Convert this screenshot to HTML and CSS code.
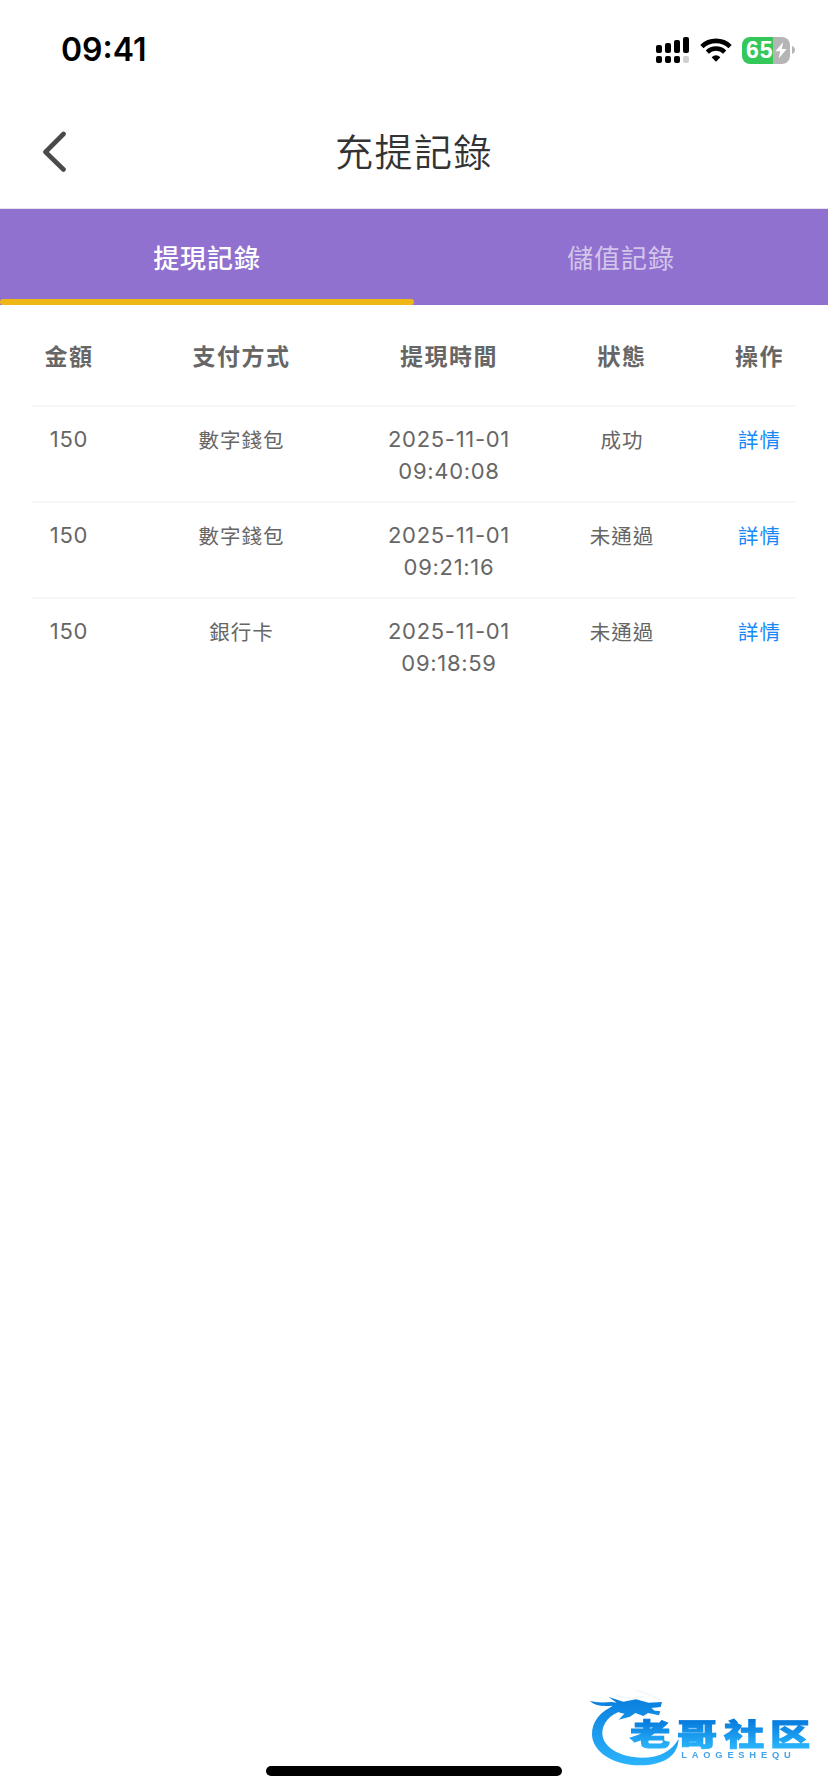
FILE: index.html
```html
<!DOCTYPE html>
<html lang="zh-Hant">

<head>
    <meta charset="UTF-8">
    <meta name="viewport" content="width=device-width, initial-scale=1.0">
    <title>充提記錄</title>
    <link rel="stylesheet" href="styles.css">
</head>

<body>
    <div class="status-bar">
        <span class="time">09:41</span>
        <div class="status-icons">
            <svg class="signal" width="33" height="26" viewBox="0 0 33 26">
                <rect x="0" y="8" width="6" height="8" rx="2"/>
                <rect x="9" y="6" width="6" height="10" rx="2"/>
                <rect x="18" y="3" width="6" height="13" rx="2"/>
                <rect x="27" y="0" width="6" height="16" rx="2"/>
                <rect x="0" y="19" width="6" height="7" rx="2"/>
                <rect x="9" y="19" width="6" height="7" rx="2"/>
                <rect x="18" y="19" width="6" height="7" rx="2"/>
                <rect x="27" y="19" width="6" height="7" rx="2" fill="#d0d0d0"/>
            </svg>
            <svg class="wifi" width="32" height="24" viewBox="0 0 32 24">
                <path d="M1.9 8.6A20.2 20.2 0 0 1 30.1 8.6" fill="none" stroke="#000" stroke-width="4.6"/>
                <path d="M7.3 14.1A12.4 12.4 0 0 1 24.7 14.1" fill="none" stroke="#000" stroke-width="4.4"/>
                <path d="M11.6 19.2Q16 15.4 20.4 19.2L16 23.8Z"/>
            </svg>
            <div class="battery">
                <span>65</span>
                <svg width="12" height="17" viewBox="0 0 12 17">
                    <path d="M8.2 0L0.4 9.3H5.2L3.7 16.6L11.6 7.1H6.8Z" fill="#fff"/>
                </svg>
            </div>
            <svg width="3" height="8" viewBox="0 0 3 8">
                <path d="M0 0Q3 1.2 3 4T0 8Z" fill="#b5b5b5"/>
            </svg>
        </div>
    </div>

    <div class="header">
        <svg class="back" width="24" height="42" viewBox="0 0 24 42">
            <path d="M20.5 3L2.5 21L20.5 38.5" fill="none" stroke="#4a4a4a" stroke-width="4.6" stroke-linecap="round" stroke-linejoin="round"/>
        </svg>
        <h1>充提記錄</h1>
    </div>

    <div class="tabs">
        <div class="tab active">提現記錄</div>
        <div class="tab">儲值記錄</div>
    </div>

    <div class="records">
        <div class="row head">
            <span>金額</span>
            <span>支付方式</span>
            <span>提現時間</span>
            <span>狀態</span>
            <span>操作</span>
        </div>
        <div class="row">
            <span class="num">150</span>
            <span>數字錢包</span>
            <span class="num">2025-11-01 09:40:08</span>
            <span>成功</span>
            <a class="detail">詳情</a>
        </div>
        <div class="row">
            <span class="num">150</span>
            <span>數字錢包</span>
            <span class="num">2025-11-01 09:21:16</span>
            <span>未通過</span>
            <a class="detail">詳情</a>
        </div>
        <div class="row">
            <span class="num">150</span>
            <span>銀行卡</span>
            <span class="num">2025-11-01 09:18:59</span>
            <span>未通過</span>
            <a class="detail">詳情</a>
        </div>
    </div>

    <svg class="logo" width="258" height="112" viewBox="0 0 774 336">
        <defs>
            <linearGradient id="blue" gradientUnits="userSpaceOnUse" x1="0" y1="60" x2="0" y2="250">
                <stop offset="0" stop-color="#0a80df"/>
                <stop offset="1" stop-color="#2bb2fb"/>
            </linearGradient>
            <!-- measured from the text baseline -->
            <linearGradient id="word" gradientUnits="userSpaceOnUse" x1="0" y1="-76" x2="0" y2="8">
                <stop offset="0" stop-color="#0578dc"/>
                <stop offset="1" stop-color="#29b3fb"/>
            </linearGradient>
        </defs>
        <!-- dragon body -->
        <path d="M138 76C90 92 65 126 66 164C68 216 130 256 210 256C275 255 324 232 326 176C306 212 270 233 216 233C150 232 99 202 97 162C96 130 118 104 160 90Z" fill="url(#blue)"/>
        <!-- dragon head, horns and whiskers -->
        <path d="M60 63Q84 70 126 66L140 68L116 51L160 65L198 58L236 68L276 66L272 81L244 84L254 92L271 94L267 106L234 99L220 108L196 99L180 110L146 119L163 101L140 95L110 91L128 77Q76 82 60 63Z" fill="url(#blue)"/>
        <path d="M140 46Q180 62 222 50M198 32Q244 42 272 62" fill="none" stroke="#edf6fd" stroke-width="4"/>
        <g class="logo-name">
            <text transform="translate(180 194) scale(1.34 1)">老</text>
            <text transform="translate(321 194) scale(1.34 1)">哥</text>
            <text transform="translate(462 194) scale(1.34 1)">社</text>
            <text transform="translate(600 194) scale(1.34 1)">区</text>
        </g>
        <text class="logo-sub" x="334" y="235" textLength="328">LAOGESHEQU</text>
    </svg>
    <div class="home-bar"></div>
</body>

</html>
```

FILE: styles.css
```css
body {
    margin: 0;
    min-height: 1792px;
    background: #fff;
    color: #666;
    font-family: "Noto Sans CJK TC", sans-serif;
}

.status-bar {
    display: flex;
    justify-content: space-between;
    height: 96px;
    padding: 0 33px 0 61px;
    box-sizing: border-box;
}

.time {
    margin-top: 30px;
    font: 600 32px/40px Inter, sans-serif;
    color: #000;
}

.status-icons {
    display: flex;
    align-items: center;
    height: 26px;
    margin-top: 37px;
}

.wifi {
    margin: 0 10px 0 11px;
}

.battery {
    display: flex;
    align-items: center;
    width: 48px;
    height: 27px;
    margin-right: 2px;
    padding-left: 4px;
    box-sizing: border-box;
    border-radius: 8px;
    background: linear-gradient(to right, #34c759 31px, #b5b5b5 31px);
    color: #fff;
}

.battery span {
    width: 29px;
    font: 700 23px/27px "Liberation Sans", sans-serif;
    letter-spacing: 1px;
}

.header {
    display: grid;
    grid-template-columns: 44px 1fr 44px;
    align-items: center;
    height: 113px;
    padding: 0 43px;
    box-sizing: border-box;
    border-bottom: 1px solid #e5e2ea;
}

h1 {
    margin: -6px 0 0;
    text-align: center;
    font-size: 38px;
    font-weight: 350;
    letter-spacing: 1.5px;
    color: #333;
}

.tabs {
    display: flex;
    height: 96px;
    background: #9171cf;
}

.tab {
    flex: 1;
    box-sizing: border-box;
    text-align: center;
    font-size: 26px;
    line-height: 96px;
    letter-spacing: 0.9px;
    color: #d3c6eb;
}

.tab.active {
    display: flex;
    flex-direction: column;
    font-weight: 500;
    color: #fff;
}

.tab.active::after {
    content: "";
    height: 6px;
    margin-top: -6px;
    border-radius: 4px;
    background: #efb715;
}

.records {
    padding: 0 32px;
}

.row {
    display: grid;
    grid-template-columns: 74px 271px 144px 202px 73px;
    height: 96px;
    padding-top: 16px;
    box-sizing: border-box;
    border-top: 2px solid #f7f7f7;
    text-align: center;
    font-size: 20.5px;
    line-height: 32px;
    letter-spacing: 1px;
}

.row.head {
    height: 100px;
    padding-top: 32px;
    border-top: none;
    font-size: 23px;
    font-weight: 700;
    line-height: 36px;
    letter-spacing: 1.5px;
}

.num {
    font-family: Inter, sans-serif;
    font-size: 22px;
    letter-spacing: 0.7px;
}

.detail {
    color: #1989fa;
}

.logo {
    position: fixed;
    left: 570px;
    top: 1680px;
    filter: blur(0.7px);
}

.logo-name {
    font: 900 90px "Noto Sans CJK SC", sans-serif;
    fill: url(#word);
    stroke: url(#word);
    stroke-width: 3px;
}

.logo-sub {
    font: 700 28px "Liberation Sans", sans-serif;
    fill: #43a2e8;
}

.home-bar {
    position: fixed;
    left: 266px;
    bottom: 16px;
    width: 296px;
    height: 10px;
    border-radius: 5px;
    background: #000;
}
```
